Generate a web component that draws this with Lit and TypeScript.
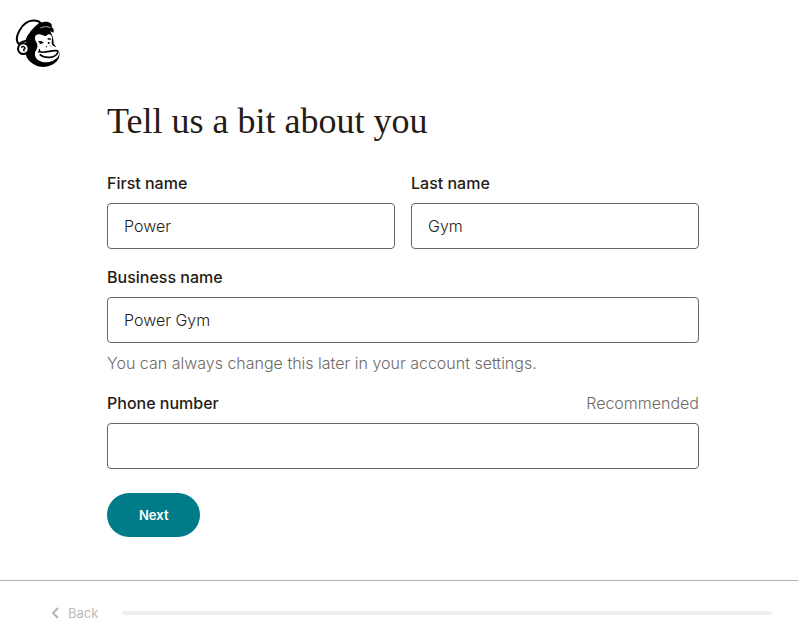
import { LitElement, html, css, svg } from "lit";
import { customElement } from "lit/decorators.js";

const logo = svg`
  <path d="M54 100C52 76 62 60 84 50L126 57C134 70 137 82 137 95L150 112C158 124 155 138 147 147C132 164 102 171 80 158C62 149 52 136 53 118Z" fill="#000"/>
  <path d="M33 96C24 90 24 74 34 56C47 33 67 21 91 28L98 33C76 50 61 66 55 86C47 87 39 90 33 96Z" fill="#fff" stroke="#000" stroke-width="6" stroke-linejoin="round"/>
  <path d="M76 58C84 41 96 29 112 29C128 29 134 37 131 45C137 50 139 56 136 62C122 55 106 53 76 66Z" fill="#000"/>
  <path d="M97 48C108 43 118 43 127 47" fill="none" stroke="#fff" stroke-width="2"/>
  <path d="M83 87C77 74 84 65 95 67C104 69 111 74 115 71C123 63 132 68 132 79L131 93C132 101 138 103 145 105C157 108 157 124 150 134C139 149 112 156 95 147C80 139 77 124 85 113C90 106 90 98 83 87Z" fill="#fff"/>
  <circle cx="46" cy="110" r="16" fill="#fff" stroke="#000" stroke-width="6"/>
  <path d="M40 107C43 101 52 104 51 110C47 110 46 114 49 118" fill="none" stroke="#000" stroke-width="4"/>
  <path d="M91 90C96 88 101 90 106 93M95 95L104 91M119 82C122 79 126 80 128 83" fill="none" stroke="#000" stroke-width="4"/>
  <circle cx="122" cy="93" r="3" fill="#000"/>
  <path d="M114 103L117 105M126 101L128 103" stroke="#000" stroke-width="3"/>
  <path d="M94 118C107 127 131 113 146 116C150 117 151 121 148 124C140 138 111 141 95 127" fill="none" stroke="#000" stroke-width="5"/>
  <path d="M91 122C94 119 96 115 94 111" fill="none" stroke="#000" stroke-width="4"/>
`;

@customElement("app-root")
export class AppRoot extends LitElement {
  static styles = css`
    :host {
      display: flex;
      flex-direction: column;
      min-height: 100vh;
      background: #fff;
      color: #241c15;
      font: 300 16px/24px Inter, "Liberation Sans", sans-serif;
    }
    * {
      box-sizing: border-box;
    }
    header {
      display: flex;
      padding: 12px 8px 0;
    }
    .logo {
      display: block;
      width: 60px;
      height: 60px;
    }
    main {
      flex: 1;
      width: 100%;
      max-width: 600px;
      margin: 0 auto;
      padding: 25px 0 40px 8px;
    }
    h1 {
      margin: 0 0 26px;
      font: 400 36px/48px "Liberation Serif", serif;
    }
    form {
      display: grid;
      grid-template-columns: 1fr 1fr;
      gap: 16px;
    }
    .field {
      display: flex;
      flex-direction: column;
      min-width: 0;
    }
    .wide {
      grid-column: 1 / -1;
    }
    .caption {
      display: flex;
      justify-content: space-between;
      margin-bottom: 8px;
    }
    label {
      font-weight: 500;
    }
    input {
      width: 100%;
      height: 46px;
      padding: 0 16px;
      border: 1px solid #6b6560;
      border-radius: 4px;
      background: #fff;
      color: inherit;
      font: inherit;
    }
    .note {
      color: #6f6a66;
    }
    .help {
      margin: 8px 0 0;
    }
    .next {
      justify-self: start;
      height: 44px;
      margin-top: 8px;
      padding: 0 32px;
      border: 0;
      border-radius: 22px;
      background: #007c89;
      color: #fff;
      font: 600 13px/20px Inter, "Liberation Sans", sans-serif;
    }
    footer {
      display: flex;
      align-items: center;
      gap: 24px;
      padding: 20px 26px 10px 50px;
      border-top: 1px solid #b5b3b0;
    }
    .back {
      display: flex;
      align-items: center;
      gap: 8px;
      padding: 0;
      border: 0;
      background: none;
      color: #bcbab8;
      font: 400 13px/24px Inter, "Liberation Sans", sans-serif;
    }
    .chevron {
      width: 10px;
      height: 12px;
    }
    .track {
      flex: 1;
      height: 4px;
      border-radius: 2px;
      background: #efeeea;
    }
  `;

  render() {
    return html`
      <header>
        <svg class="logo" viewBox="0 0 180 180" role="img" aria-label="Mailchimp">${logo}</svg>
      </header>
      <main>
        <h1>Tell us a bit about you</h1>
        <form @submit=${(e: Event) => e.preventDefault()}>
          <div class="field">
            <div class="caption"><label for="first">First name</label></div>
            <input id="first" type="text" value="Power" />
          </div>
          <div class="field">
            <div class="caption"><label for="last">Last name</label></div>
            <input id="last" type="text" value="Gym" />
          </div>
          <div class="field wide">
            <div class="caption"><label for="business">Business name</label></div>
            <input id="business" type="text" value="Power Gym" aria-describedby="business-help" />
            <p class="help note" id="business-help">You can always change this later in your account settings.</p>
          </div>
          <div class="field wide">
            <div class="caption">
              <label for="phone">Phone number</label>
              <span class="note" id="phone-note">Recommended</span>
            </div>
            <input id="phone" type="tel" aria-describedby="phone-note" />
          </div>
          <button class="next wide" type="submit">Next</button>
        </form>
      </main>
      <footer>
        <button class="back" type="button">
          <svg class="chevron" viewBox="0 0 10 12" aria-hidden="true">
            <path d="M8 1L3 6l5 5" fill="none" stroke="#b4b2b0" stroke-width="2" />
          </svg>
          Back
        </button>
        <div class="track" role="progressbar" aria-label="Setup progress" aria-valuenow="0"></div>
      </footer>
    `;
  }
}
